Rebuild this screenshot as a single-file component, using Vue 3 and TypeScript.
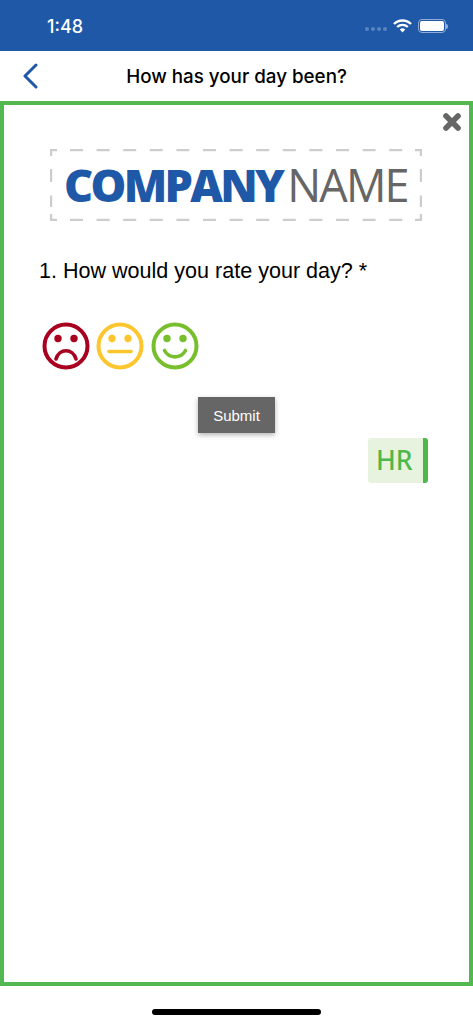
<template>
  <div class="screen">
    <header class="status-bar">
      <span class="time">1:48</span>
      <div class="status-icons">
        <div class="signal">
          <i></i><i></i><i></i><i></i>
        </div>
        <svg class="wifi" width="19" height="14" viewBox="0 0 19 14">
          <path d="M1 5 A12 12 0 0 1 18 5" fill="none" stroke="#fff" stroke-width="2.4" />
          <path d="M4.2 8 A7.6 7.6 0 0 1 14.8 8" fill="none" stroke="#fff" stroke-width="2.4" />
          <path d="M6.8 10.6 A4 4 0 0 1 12.2 10.6 L9.5 13.6 Z" fill="#fff" />
        </svg>
        <div class="battery">
          <div class="battery-fill"></div>
        </div>
        <div class="battery-cap"></div>
      </div>
    </header>

    <nav class="nav-bar">
      <svg class="back" width="16" height="26" viewBox="0 0 16 26">
        <path d="M14 2 L3 13 L14 24" fill="none" stroke="#2058a8" stroke-width="3" stroke-linecap="round" stroke-linejoin="round" />
      </svg>
      <h1 class="title">How has your day been?</h1>
    </nav>

    <main class="frame">
      <svg class="close" width="20" height="20" viewBox="0 0 20 20">
        <path d="M4 4 L16 16 M16 4 L4 16" stroke="#666" stroke-width="5.6" stroke-linecap="round" />
      </svg>

      <div class="logo">
        <svg class="logo-dashes" width="372" height="72" viewBox="0 0 372 72">
          <path d="M1 7 V1 H7" fill="none" stroke="#cdcdcd" stroke-width="2.4" />
          <path d="M365 1 H371 V7" fill="none" stroke="#cdcdcd" stroke-width="2.4" />
          <path d="M1 65 V71 H7" fill="none" stroke="#cdcdcd" stroke-width="2.4" />
          <path d="M365 71 H371 V65" fill="none" stroke="#cdcdcd" stroke-width="2.4" />
          <path d="M20 1 H360" fill="none" stroke="#cdcdcd" stroke-width="2.4" stroke-dasharray="13 13.6" />
          <path d="M20 71 H360" fill="none" stroke="#cdcdcd" stroke-width="2.4" stroke-dasharray="13 13.6" />
          <path d="M1 20 V58" fill="none" stroke="#cdcdcd" stroke-width="2.4" stroke-dasharray="13 13.6" />
          <path d="M371 20 V58" fill="none" stroke="#cdcdcd" stroke-width="2.4" stroke-dasharray="13 13.6" />
        </svg>
        <span class="logo-company">COMPANY</span><span class="logo-name">NAME</span>
      </div>

      <p class="question">1. How would you rate your day? *</p>

      <div class="faces">
        <svg v-for="face in faces" :key="face.name" width="48" height="48" viewBox="0 0 48 48">
          <circle cx="24" cy="24" r="21.5" fill="none" :stroke="face.color" stroke-width="4" />
          <circle cx="16" cy="16.5" r="3.7" :fill="face.color" />
          <circle cx="32" cy="16.5" r="3.7" :fill="face.color" />
          <path :d="face.mouth" fill="none" :stroke="face.color" stroke-width="3.6" stroke-linecap="round" />
        </svg>
      </div>

      <div class="submit-row">
        <button class="submit" type="button">Submit</button>
      </div>

      <div class="badge-row">
        <div class="badge">HR</div>
      </div>
    </main>

    <footer class="home-area">
      <div class="home-indicator"></div>
    </footer>
  </div>
</template>

<script setup lang="ts">
interface Face {
  name: string
  color: string
  mouth: string
}

const faces: Face[] = [
  { name: 'sad', color: '#a8001f', mouth: 'M14 37 C17 26 31 26 34 37' },
  { name: 'neutral', color: '#fdc62e', mouth: 'M13 29.5 H35' },
  { name: 'happy', color: '#78bf2e', mouth: 'M13.5 28.5 C18 37 30 37 34.5 28.5' }
]
</script>

<style>
html,
body {
  margin: 0;
  background: #fff;
}
</style>

<style scoped>
.screen {
  width: 473px;
  height: 1024px;
  display: flex;
  flex-direction: column;
  background: #fff;
  font-family: "Liberation Sans", Arial, sans-serif;
  overflow: hidden;
}

.status-bar {
  height: 51px;
  flex: none;
  box-sizing: border-box;
  background: #2058a8;
  display: flex;
  align-items: center;
  justify-content: space-between;
  padding: 0 25px 0 47px;
  color: #fff;
}

.time {
  font-family: Inter, "Liberation Sans", sans-serif;
  font-size: 18px;
  font-weight: 500;
  margin-top: 1px;
}

.status-icons {
  display: flex;
  align-items: center;
  margin-top: 1px;
}

.signal {
  display: flex;
  gap: 2px;
  margin: 5px 6px 0 0;
}

.signal i {
  width: 4px;
  height: 4px;
  border-radius: 50%;
  background: #5a83c1;
}

.wifi {
  margin-right: 6px;
}

.battery {
  width: 28px;
  height: 14px;
  box-sizing: border-box;
  border: 1px solid #8fadd6;
  border-radius: 4px;
  padding: 1px;
}

.battery-fill {
  height: 100%;
  background: #fff;
  border-radius: 2px;
}

.battery-cap {
  width: 2px;
  height: 5px;
  background: #8fadd6;
  border-radius: 0 2px 2px 0;
}

.nav-bar {
  height: 50px;
  flex: none;
  position: relative;
  display: flex;
  align-items: center;
  justify-content: center;
}

.back {
  position: absolute;
  left: 22px;
  top: 12px;
}

.title {
  margin: 0;
  font-family: Inter, "Liberation Sans", sans-serif;
  font-size: 18.8px;
  font-weight: 500;
  color: #000;
}

.frame {
  height: 885px;
  flex: none;
  box-sizing: border-box;
  border: 4px solid #53b84f;
  position: relative;
  padding: 44px 35px 0;
}

.close {
  position: absolute;
  right: 7px;
  top: 7px;
}

.logo {
  width: 372px;
  height: 72px;
  margin-left: 11px;
  box-sizing: border-box;
  padding-left: 14px;
  position: relative;
  display: flex;
  align-items: center;
  font-family: "Open Sans", sans-serif;
  line-height: 72px;
}

.logo-dashes {
  position: absolute;
  left: 0;
  top: 0;
}

.logo-company {
  color: #2058a8;
  font-size: 45px;
  font-weight: 800;
  letter-spacing: -2.7px;
  margin-right: 5px;
}

.logo-name {
  color: #666;
  font-size: 45px;
  font-weight: 400;
  letter-spacing: -1.8px;
}

.question {
  margin: 37px 0 0;
  font-size: 21.55px;
  line-height: 26px;
  color: #000;
}

.faces {
  display: flex;
  gap: 6.5px;
  margin-top: 38px;
  margin-left: 2.5px;
}

.faces svg {
  display: block;
}

.submit-row {
  display: flex;
  justify-content: center;
  margin-top: 27px;
}

.submit {
  width: 77px;
  height: 36px;
  padding: 0;
  border: 0;
  background: #666;
  color: #fff;
  font-family: "Liberation Sans", Arial, sans-serif;
  font-size: 15px;
  box-shadow: 0 2px 5px rgba(0, 0, 0, 0.3);
}

.badge-row {
  display: flex;
  justify-content: flex-end;
  margin-top: 5px;
  margin-right: 6px;
}

.badge {
  width: 60px;
  height: 45px;
  box-sizing: border-box;
  background: #e8f3df;
  border-right: 5px solid #4fb84b;
  border-radius: 3px;
  color: #4fb84b;
  font-family: "Noto Sans", sans-serif;
  font-size: 26.5px;
  line-height: 45px;
  font-weight: 500;
  padding-left: 8px;
}

.home-area {
  flex: 1;
  position: relative;
  display: flex;
  justify-content: center;
}

.home-indicator {
  width: 169px;
  height: 6px;
  margin-top: 23px;
  background: #000;
  border-radius: 3px;
}
</style>
